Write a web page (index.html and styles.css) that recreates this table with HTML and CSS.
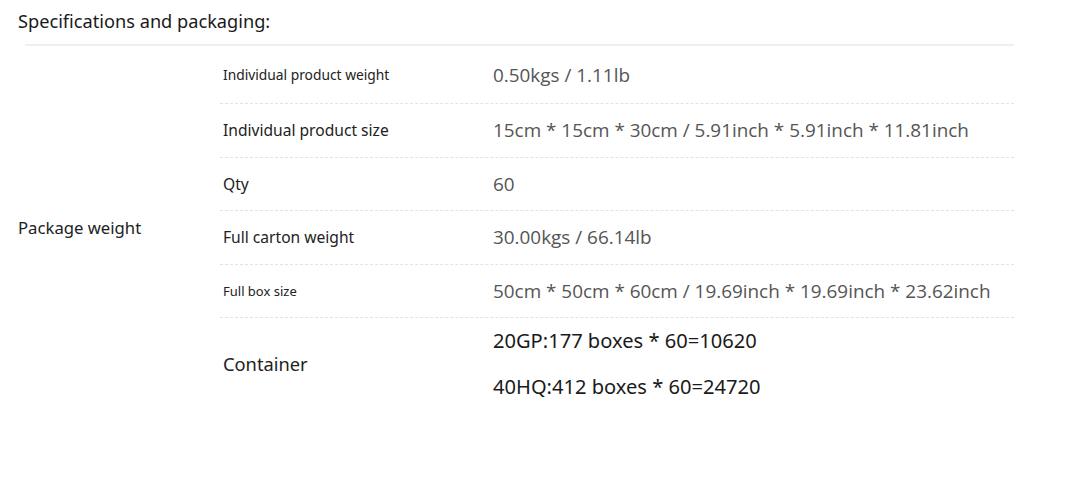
FILE: index.html
```html
<!DOCTYPE html>
<html>
<head>
<meta charset="utf-8">
<link rel="stylesheet" href="styles.css">
</head>
<body>
<div class="page">
  <h1 class="title">Specifications and packaging:</h1>
  <div class="rule"></div>
  <div class="spec">
    <div class="group-label">Package weight</div>
    <div class="table">
      <div class="row">
        <div class="label small">Individual product weight</div>
        <div class="value">0.50kgs / 1.11lb</div>
      </div>
      <div class="row">
        <div class="label">Individual product size</div>
        <div class="value">15cm * 15cm * 30cm / 5.91inch * 5.91inch * 11.81inch</div>
      </div>
      <div class="row">
        <div class="label">Qty</div>
        <div class="value">60</div>
      </div>
      <div class="row">
        <div class="label">Full carton weight</div>
        <div class="value">30.00kgs / 66.14lb</div>
      </div>
      <div class="row">
        <div class="label tiny">Full box size</div>
        <div class="value">50cm * 50cm * 60cm / 19.69inch * 19.69inch * 23.62inch</div>
      </div>
      <div class="row last">
        <div class="label big">Container</div>
        <div class="value multi">
          <div>20GP:177 boxes * 60=10620</div>
          <div>40HQ:412 boxes * 60=24720</div>
        </div>
      </div>
    </div>
  </div>
</div>
</body>
</html>
```

FILE: styles.css
```css
* { box-sizing: border-box; }
html, body { margin: 0; padding: 0; background: #fff; }
.page {
  width: 1065px;
  height: 477px;
  font-family: "Noto Sans", "Liberation Sans", sans-serif;
  color: #222;
}
.title {
  margin: 0;
  padding: 9px 0 0 18px;
  height: 44px;
  font-size: 18.2px;
  font-weight: 400;
  line-height: 24px;
  color: #1a1a1a;
}
.rule {
  margin-left: 25px;
  width: 989px;
  height: 2px;
  background: #efefef;
}
.spec {
  display: flex;
  align-items: center;
}
.group-label {
  padding-left: 18px;
  width: 220px;
  font-size: 16.7px;
  color: #222;
}
.table {
  width: 794px;
}
.row {
  display: flex;
  align-items: center;
  height: 53.5px;
  border-bottom: 1px dashed #e2e2e2;
}
.row:first-child { height: 58px; }
.row.last { height: 90px; border-bottom: none; }
.label {
  width: 273px;
  padding-left: 3px;
  font-size: 15.6px;
  color: #222;
}
.label.small { font-size: 13.8px; }
.label.tiny { font-size: 13px; }
.label.big { font-size: 18.3px; }
.value {
  font-family: "Open Sans", "Liberation Sans", sans-serif;
  font-size: 18.9px;
  color: #555;
}
.value.multi {
  font-family: "Noto Sans", "Liberation Sans", sans-serif;
  font-size: 20.1px;
  color: #1a1a1a;
  display: flex;
  flex-direction: column;
  gap: 19px;
  line-height: 27px;
}
```
